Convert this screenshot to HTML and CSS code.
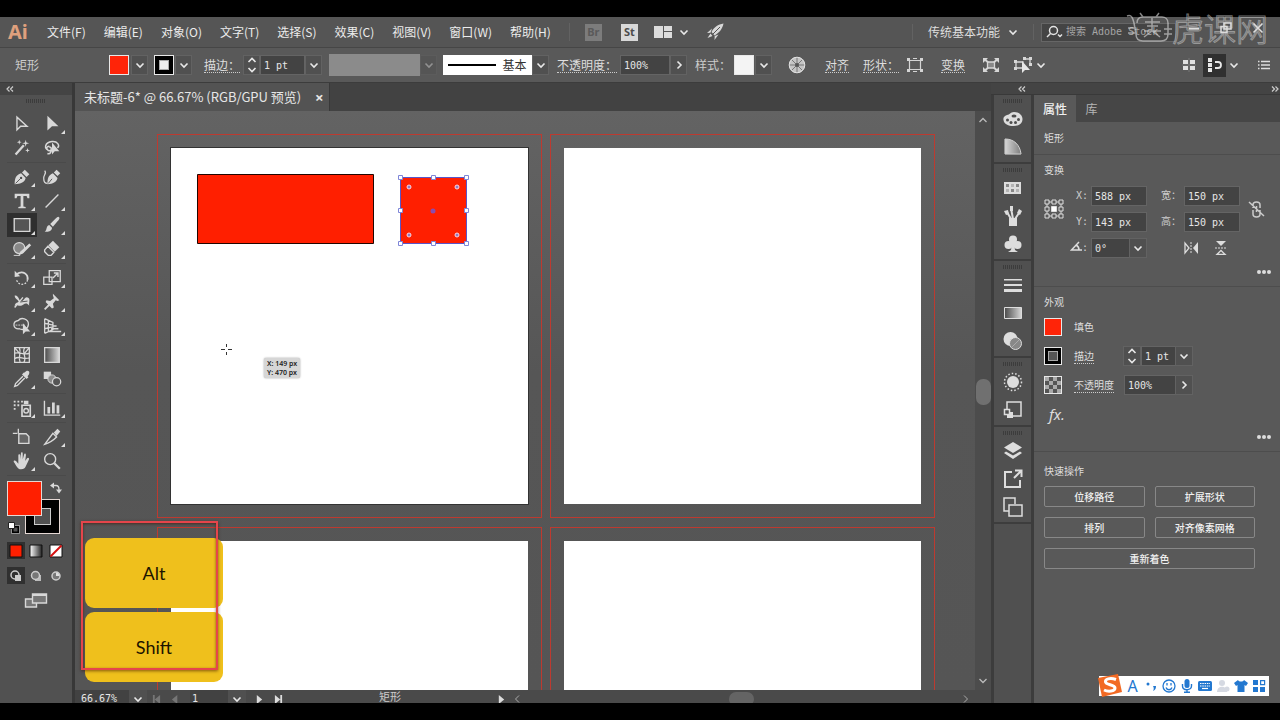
FILE: index.html
```html
<!DOCTYPE html>
<html lang="zh-CN">
<head>
<meta charset="utf-8">
<title>未标题-6</title>
<link rel="stylesheet" href="styles.css">
</head>
<body>
<svg class="defs" aria-hidden="true">
  <defs>
    <linearGradient id="fade" x1="0" x2="1"><stop offset="0" stop-color="#4a4a4a"/><stop offset="1" stop-color="#d8d8d8"/></linearGradient>
    <linearGradient id="fade-rev" x1="0" x2="1"><stop offset="0" stop-color="#ffffff"/><stop offset="1" stop-color="#222222"/></linearGradient>
    <symbol id="down" viewBox="0 0 10 10"><path d="M1.5 3.5 5 7l3.5-3.5" fill="none" stroke="currentColor" stroke-width="1.6"/></symbol>
    <symbol id="right" viewBox="0 0 10 10"><path d="M3.5 1.5 7 5 3.5 8.500" fill="none" stroke="currentColor" stroke-width="1.6"/></symbol>
    <symbol id="steps" viewBox="0 0 10 18"><path d="M1.500 6 5 2.500 8.500 6M1.500 12 5 15.500 8.500 12" fill="none" stroke="currentColor" stroke-width="1.600"/></symbol>
    <symbol id="collapse" viewBox="0 0 8 6"><path d="M3.500.5 1 3l2.500 2.500M7 .5 4.500 3 7 5.500" fill="none" stroke="currentColor" stroke-width="1.200"/></symbol>
    <symbol id="dots" viewBox="0 0 16 6"><circle cx="3" cy="3" r="2"/><circle cx="8" cy="3" r="2"/><circle cx="13" cy="3" r="2"/></symbol>
  </defs>
</svg>

<div class="app">
  <header class="menubar">
    <span class="logo">Ai</span>
    <nav class="menus">
      <button>文件(F)</button><button>编辑(E)</button><button>对象(O)</button><button>文字(T)</button><button>选择(S)</button><button>效果(C)</button><button>视图(V)</button><button>窗口(W)</button><button>帮助(H)</button>
    </nav>
    <div class="launchers">
      <button class="badge dim">Br</button>
      <button class="badge">St</button>
      <button class="arrange" aria-label="排列文档"><svg width="18" height="12" viewBox="0 0 18 12"><path d="M0 0h9v12H0zM10 0h8v5h-8zM10 6h8v6h-8z" fill="#dcdcdc"/></svg><svg class="chev"><use href="#down"/></svg></button>
      <button aria-label="GPU"><svg width="18" height="18" viewBox="0 0 18 18"><path d="M17.500.5C12 1.500 8 4 5.500 9l3 3.500C13 10 16.500 6 17.500.5zM6 5.500 1 10l3.500-.3zM12.500 11.500 8.500 17l.2-4zM4.500 10.500 1.500 15l5-2z" fill="#d8d8d8"/><path d="m7 11 7-7" stroke="#535353"/></svg></button>
    </div>
    <button class="workspace">传统基本功能 <svg class="chev"><use href="#down"/></svg></button>
    <label class="search"><svg width="18" height="14" viewBox="0 0 18 14" fill="none" stroke="#e4e4e4" stroke-width="1.500"><circle cx="7.500" cy="5.500" r="4"/><path d="M4.500 8.500 1 12"/><path d="m12 9.500 2 2 2-2"/></svg><input type="text" placeholder="搜索 Adobe Stock" aria-label="搜索 Adobe Stock"></label>
    <div class="window-buttons">
      <button aria-label="最小化"><svg width="12" height="12" viewBox="0 0 12 12"><path d="M1 6.500h10" stroke="#ddd" stroke-width="2"/></svg></button>
      <button aria-label="还原"><svg width="12" height="12" viewBox="0 0 12 12" fill="none" stroke="#ddd" stroke-width="1.500"><path d="M4 1h7v6H4zM1 4.500h6v6H1z"/></svg></button>
      <button aria-label="关闭"><svg width="12" height="12" viewBox="0 0 12 12"><path d="m1.500 1.500 9 9m0-9-9 9" stroke="#ddd" stroke-width="1.600"/></svg></button>
    </div>
    <div class="watermark">
      <svg width="46" height="32" viewBox="0 0 46 32" fill="none" stroke="currentColor" stroke-width="1.500"><path d="M1 5c5-2 6 3 7 7l2 11c0 5 3 7 7 7h18c5 0 7-3 7-7V12c0-4-3-6-6-6H17c-4 0-6 2-6 6M14 2l3 4M33 2l-3 4M19 11h15M21 15h11M18 20h17M26 7v13M26 20l-8 6M26 20l8 6M2 17h8M2 22h7M38 18h8M38 23h8"/></svg>
      <span>虎课网</span>
    </div>
  </header>

  <div class="controls">
    <span class="selection">矩形</span>
    <button class="swatch red" aria-label="填色"></button>
    <button class="drop" aria-label="填色选项"><svg class="chev"><use href="#down"/></svg></button>
    <button class="swatch stroke" aria-label="描边颜色"></button>
    <button class="drop" aria-label="描边选项"><svg class="chev"><use href="#down"/></svg></button>
    <label class="dotted" for="stroke-top">描边：</label>
    <button class="drop" aria-label="调整描边"><svg class="steps"><use href="#steps"/></svg></button>
    <input class="field" id="stroke-top" type="text" value="1 pt">
    <button class="drop" aria-label="描边粗细"><svg class="chev"><use href="#down"/></svg></button>
    <button class="profile" aria-label="宽度配置文件"></button>
    <button class="drop faint" aria-label="配置文件列表"><svg class="chev"><use href="#down"/></svg></button>
    <button class="brush"><i></i>基本</button>
    <button class="drop" aria-label="画笔列表"><svg class="chev"><use href="#down"/></svg></button>
    <label class="dotted" for="opacity-top">不透明度：</label>
    <input class="field" id="opacity-top" type="text" value="100%">
    <button class="drop" aria-label="不透明度选项"><svg class="chev"><use href="#right"/></svg></button>
    <span class="plain">样式：</span>
    <button class="swatch white" aria-label="样式"></button>
    <button class="drop" aria-label="样式列表"><svg class="chev"><use href="#down"/></svg></button>
    <button class="glyph" aria-label="重新着色图稿"><svg width="18" height="18" viewBox="0 0 18 18"><circle cx="9" cy="9" r="8" fill="#c4c4c4"/><path d="M9 1v16M1 9h16M3.500 3.500l11 11M14.500 3.500l-11 11" stroke="#777" /><circle cx="9" cy="9" r="2" fill="#555"/><circle cx="9" cy="9" r="7.800" fill="none" stroke="#e2e2e2"/></svg></button>
    <button class="dotted">对齐</button>
    <button class="dotted">形状：</button>
    <button class="glyph" aria-label="形状属性"><svg width="18" height="16" viewBox="0 0 18 16" fill="none" stroke="#d4d4d4" stroke-width="1.200"><path d="M3.500 3.500h11v9h-11z"/><path d="M1 1h3v3H1zM14 1h3v3h-3zM1 12h3v3H1zM14 12h3v3h-3z" fill="#d4d4d4" stroke="none"/><path d="M7 1.500h4M7 14.500h4"/></svg></button>
    <button class="dotted">变换</button>
    <button class="glyph" aria-label="隔离"><svg width="18" height="16" viewBox="0 0 18 16" fill="#d6d6d6"><path d="M5.500 5h7v6h-7z" fill="#888" stroke="#d6d6d6" stroke-width="1.300"/><path d="M1 1h5L4.500 2.500 7 5 5.500 6 3 4 1 6zM17 1v5l-2-2-2.500 2L11 5l2.500-2.500L12 1zM1 15v-5l2 2 2.500-2L7 11l-2.500 2.500L6 15zM17 15h-5l1.500-1.500L11 11l1.500-1 2.500 2 2-2z"/></svg></button>
    <button class="glyph pair" aria-label="选择类似对象"><svg width="18" height="18" viewBox="0 0 18 18"><path d="M2 6h7v6H2zM11 3h5v5" fill="none" stroke="#d8d8d8" stroke-width="1.300"/><path d="M0 4h3v3H0zM0 11h3v3H0zM9 1h3v3H9zM15 1h3v3h-3zM15 7h3v3h-3z" fill="#d8d8d8"/><path d="M8 5v12l3-3h5z" fill="#e6e6e6"/></svg><svg class="chev"><use href="#down"/></svg></button>
    <span></span>
    <button class="glyph" aria-label="对齐像素"><svg width="14" height="14" viewBox="0 0 14 14" fill="#e0e0e0"><path d="M1 2h5v4H1zM8 2h5v4H8zM1 8h5v4H1zM8 8h5v4H8z"/><path d="M7 0v14M0 7h14" stroke="#777"/></svg></button>
    <button class="glyph active" aria-label="贴紧"><svg width="16" height="16" viewBox="0 0 16 16" fill="#e8e8e8"><path d="M1 1h4v4H1zM1 6h4v4H1zM1 11h4v4H1z"/><path d="M8 5h3a3 3 0 0 1 0 6H8" fill="none" stroke="#e8e8e8" stroke-width="1.800"/></svg></button>
    <svg class="chev"><use href="#down"/></svg>
    <button class="glyph" aria-label="菜单"><svg width="14" height="12" viewBox="0 0 14 12" stroke="#ddd" stroke-width="1.500"><path d="M4 2.500h9M4 6h9M4 9.500h9M1 2.500h1.500M1 6h1.500M1 9.500h1.500"/></svg></button>
  </div>

  <main class="workarea">
    <aside class="toolbox">
      <div class="cap"><svg width="8" height="6"><use href="#collapse"/></svg></div>
      <div class="grip"></div>
      <div class="tools">
        <div class="group">
          <button aria-label="选择"><svg viewBox="0 0 24 24"><path d="M6.500 4.500v14l4-4h7z" fill="none" stroke="#d8d8d8" stroke-width="1.500"/></svg></button>
          <button class="more" aria-label="直接选择"><svg viewBox="0 0 24 24"><path d="M7 3v16l5-4.500h7z"/></svg></button>
          <button aria-label="魔棒"><svg viewBox="0 0 24 24"><path d="m5 19 9-10" stroke="#d8d8d8" stroke-width="2.500"/><path d="m16 3 .8 3 3 .8-3 .8-.8 3-.8-3-3-.8 3-.8zM9 3l.6 2 2 .6-2 .6L9 8.500l-.6-2.300-2-.6 2-.6zM18 12l.6 2 2 .6-2 .6-.6 2-.6-2-2-.6 2-.6z"/></svg></button>
          <button aria-label="套索"><svg viewBox="0 0 24 24"><path d="M8 14c-5-1-4-8 4-9 6-.5 9 4 6 7M9 10c-4 0-3 5 0 5 3 0 3-4 0-4M11 12c1 4-1 7-4 6" fill="none" stroke="#d8d8d8" stroke-width="1.600"/><path d="M12 6v13l3-3.500h5z"/></svg></button>
        </div>
        <div class="group">
          <button class="more" aria-label="钢笔"><svg viewBox="0 0 24 24"><path d="M4 20c0-6 1-10 7-12l5 5c-1 5-5 6-12 7zM12 7l3-3 5 5-3 3z"/><path d="m5 19 5-5" stroke="#4f4f4f"/><circle cx="11" cy="13" r="1.300" fill="#4f4f4f"/></svg></button>
          <button aria-label="曲率"><svg viewBox="0 0 24 24"><path d="M7 20c0-6 1-10 6-12l5 5c-1 5-5 6-11 7zM14 7l3-3 4 4-3 3z"/><path d="M4 5c3 3-2 5-1 9 0 3 1 5 4 5" fill="none" stroke="#d8d8d8" stroke-width="1.400"/><path d="m8 19 4-5" stroke="#4f4f4f"/></svg></button>
          <button class="more" aria-label="文字"><svg viewBox="0 0 24 24"><path d="M4 4h16v5h-2l-1-2.500h-3.500V18l2.500.5V20H8v-1.500l2.500-.5V6.500H7L6 9H4z"/></svg></button>
          <button class="more" aria-label="直线段"><svg viewBox="0 0 24 24"><path d="M5 19 19 5" stroke="#d8d8d8" stroke-width="1.500"/></svg></button>
          <button class="more on" aria-label="矩形"><svg viewBox="0 0 24 24"><path d="M3.500 5h17v14h-17z" fill="#555" stroke="#d8d8d8" stroke-width="1.500"/></svg></button>
          <button class="more" aria-label="画笔"><svg viewBox="0 0 24 24"><path d="M19 3c2 1 1 3-1 5l-5 6-3-3 6-6c1-1 2-2 3-2zM9 12l3 3c0 4-5 5-8 4 3-1 1-6 5-7z"/></svg></button>
          <button class="more" aria-label="Shaper"><svg viewBox="0 0 24 24"><circle cx="9" cy="11" r="6" fill="#888" stroke="#d8d8d8" stroke-width="1.300"/><path d="m20 6 2 2-9 9-5 2 2-4z"/><path d="M3 19h7" stroke="#d8d8d8"/></svg></button>
          <button class="more" aria-label="橡皮擦"><svg viewBox="0 0 24 24"><path d="m13 3 7 7-5 5-7-7z"/><path d="m7.500 9 6.500 6.500-3 3.500h-3l-4-4v-2z" fill="none" stroke="#d8d8d8" stroke-width="1.500"/></svg></button>
        </div>
        <div class="group">
          <button class="more" aria-label="旋转"><svg viewBox="0 0 24 24"><path d="M6 8c7-5 13 0 12 6" fill="none" stroke="#d8d8d8" stroke-width="2"/><path d="M18 14c-1 6-10 7-12 0" fill="none" stroke="#d8d8d8" stroke-width="1.300" stroke-dasharray="2 1.500"/><path d="M4 4v7l6-1z"/></svg></button>
          <button class="more" aria-label="比例缩放"><svg viewBox="0 0 24 24"><path d="M9 4h12v12H9zM3 11h9v8H3z" fill="none" stroke="#d8d8d8" stroke-width="1.400"/><path d="m13 12 5-5M14 6.500h4.500V11" fill="none" stroke="#d8d8d8" stroke-width="1.500"/></svg></button>
          <button class="more" aria-label="宽度"><svg viewBox="0 0 24 24"><path d="M4 5c5-1 4 7 8 6 3-1 3-5 6-4 4 1 1 6 2 9-4-5-6-1-9 0-4 1-4-3-7 1 0-4 3-5 5-4-1-4-5-4-5-8z"/><path d="M4 18 13 7" stroke="#d8d8d8" stroke-width="1.500"/><path d="m10 12 8-1" stroke="#4f4f4f"/></svg></button>
          <button class="more" aria-label="操控变形"><svg viewBox="0 0 24 24"><path d="m13 3 7 7-2 1-2-1-3 4 1 4-2 1-7-7 1-2 4 1 4-3-1-3z"/><path d="m4 20 5-5" stroke="#d8d8d8" stroke-width="2"/></svg></button>
          <button class="more" aria-label="形状生成器"><svg viewBox="0 0 24 24"><path d="M8 6c3-4 11-2 11 4 0 5-6 7-10 5-7 1-8-8-1-9z" fill="none" stroke="#d8d8d8" stroke-width="1.400"/><path d="M5 11h10" stroke="#d8d8d8" stroke-dasharray="2 1"/><path d="M13 9v12l3-3h5z"/></svg></button>
          <button class="more" aria-label="透视网格"><svg viewBox="0 0 24 24" fill="none" stroke="#d8d8d8" stroke-width="1.400"><path d="M4 4v16M4 4l9 4v8l-9 4M8 6v12M4 9l9 2M4 15l9-2M13 12h4M11 15h8M8 18h14"/></svg></button>
        </div>
        <div class="group">
          <button aria-label="网格"><svg viewBox="0 0 24 24" fill="none" stroke="#d8d8d8" stroke-width="1.400"><path d="M4 4h16v16H4zM4 10c6-2 10 3 16 0M4 16c5-4 10 2 16-1M9 4c3 5-2 10 1 16M15 4c-4 5 3 10-1 16M4 4l5 6M20 4l-5 6"/></svg></button>
          <button aria-label="渐变"><svg viewBox="0 0 24 24"><path d="M4 4h16v16H4z" fill="url(#fade)" stroke="#d8d8d8" stroke-width="1.400"/></svg></button>
          <button class="more" aria-label="吸管"><svg viewBox="0 0 24 24"><path d="M15 5c2-3 5-2 5 0s-1 3-2 4l1 1-2 2-5-5 2-2z"/><path d="m13 9-8 8-1 3 3-1 8-8" fill="none" stroke="#d8d8d8" stroke-width="1.500"/></svg></button>
          <button aria-label="混合"><svg viewBox="0 0 24 24"><path d="M3 4h8v8H3z"/><circle cx="12" cy="12" r="4.500" fill="#8b8b8b" stroke="#d8d8d8"/><circle cx="17" cy="15" r="4.500" fill="#555" stroke="#d8d8d8" stroke-width="1.400"/></svg></button>
        </div>
        <div class="group">
          <button class="more" aria-label="符号喷枪"><svg viewBox="0 0 24 24"><path d="M12 9h9v12h-9z" fill="none" stroke="#d8d8d8" stroke-width="1.800"/><path d="M14 4h5v4h-5zM3 4h2v2H3zM7 4h2v2H7zM11 4h2v2h-2zM3 8h2v2H3zM7 8h2v2H7zM3 12h2v2H3z"/><circle cx="16.500" cy="15" r="2.500" fill="none" stroke="#d8d8d8" stroke-width="1.500"/></svg></button>
          <button class="more" aria-label="柱形图"><svg viewBox="0 0 24 24"><path d="M3 4h1.500v15H21v1.500H3zM7 11h3v7H7zM12 6h3v12h-3zM17 9h3v9h-3z"/></svg></button>
        </div>
        <div class="group">
          <button aria-label="画板"><svg viewBox="0 0 24 24"><path d="M8 3v5M2 8h5" stroke="#d8d8d8" stroke-width="1.400"/><path d="M8.500 8.500h8l3 3V19h-11z" fill="#666" stroke="#d8d8d8" stroke-width="1.500"/></svg></button>
          <button class="more" aria-label="切片"><svg viewBox="0 0 24 24"><path d="m4 20 9-12 4 4c-3 3-6 6-13 8z" fill="none" stroke="#d8d8d8" stroke-width="1.500"/><path d="m14 7 4-4 3 3-4 5z"/></svg></button>
          <button class="more" aria-label="抓手"><svg viewBox="0 0 24 24"><path d="M8 15V6c0-2 2-2 2 0v4l.8-6c.2-2 2-2 2 0v6l1.500-5c.5-2 2-1 2 .5L15.500 12l2-3c1-1.500 3 0 2 1.500L16 18c-1 2-2 3-5 3-4 0-5-4-8-8-.5-2 1.500-2 2.500-1z"/></svg></button>
          <button aria-label="缩放"><svg viewBox="0 0 24 24" fill="none" stroke="#d8d8d8"><circle cx="10" cy="10" r="6" stroke-width="1.500"/><path d="m14.500 14.500 6 6" stroke-width="2.500"/></svg></button>
        </div>
      </div>
      <div class="paint">
        <span class="paint-stroke"></span><span class="paint-fill"></span>
        <svg class="swap" width="12" height="12" viewBox="0 0 12 12" fill="none" stroke="#d8d8d8" stroke-width="1.300"><path d="M3 3.500h3c2 0 3 1 3 4V9"/><path d="M4 .5v6l-4-3zM6 7.500h6L9 11.500z" fill="#d8d8d8" stroke="none"/></svg>
        <svg class="reset" width="12" height="12" viewBox="0 0 12 12"><path d="M4.500 4.500h6v6h-6z" fill="none" stroke="#000" stroke-width="2"/><path d="M3.500 3.500h8v8h-8z" fill="none" stroke="#ddd" stroke-width=".6"/><path d="M.5.5h6v6h-6z" fill="#fff" stroke="#222"/></svg>
      </div>
      <div class="modes">
        <button class="on" aria-label="颜色"><svg viewBox="0 0 14 14"><path d="M1 1h12v12H1z" fill="#ff1f00" stroke="#111"/></svg></button>
        <button aria-label="渐变色"><svg viewBox="0 0 14 14"><path d="M1 1h12v12H1z" fill="url(#fade-rev)" stroke="#111"/></svg></button>
        <button aria-label="无"><svg viewBox="0 0 14 14"><path d="M1 1h12v12H1z" fill="#fff" stroke="#111"/><path d="M1.500 12.500 12.500 1.500" stroke="#d51010" stroke-width="2"/></svg></button>
      </div>
      <div class="modes draw">
        <button class="on" aria-label="正常绘图"><svg viewBox="0 0 14 14"><circle cx="6" cy="6" r="4" fill="none" stroke="#ccc" stroke-width="1.500"/><path d="M6 6h6v6H6z" fill="#ccc"/></svg></button>
        <button aria-label="背面绘图"><svg viewBox="0 0 14 14"><path d="M6 6h6v6H6z" fill="#bbb"/><circle cx="6.500" cy="6.500" r="4" fill="#777" stroke="#ccc" stroke-width="1.500"/></svg></button>
        <button aria-label="内部绘图"><svg viewBox="0 0 14 14"><circle cx="7" cy="7" r="4" fill="#777" stroke="#ccc" stroke-width="1.500"/><path d="M7 7V3.500A3.500 3.500 0 0 1 10.500 7z" fill="#ddd"/></svg></button>
      </div>
      <button class="screen" aria-label="更改屏幕模式"><svg width="24" height="18" viewBox="0 0 24 18" fill="#777" stroke="#d8d8d8" stroke-width="1.400"><path d="M1.500 7h11v8h-11z"/><path d="M8.500 2h14v9h-14z"/><path d="M8 3h15" stroke-width="2"/></svg></button>
    </aside>

    <section class="document">
      <div class="tabs"><div class="tab"><span>未标题-6* @ 66.67% (RGB/GPU 预览)</span><button aria-label="关闭文档">×</button></div></div>
      <div class="view">
        <div class="canvas">
          <div class="bleed r1 c1"><div class="artboard current"></div></div>
          <div class="bleed r1 c2"><div class="artboard"></div></div>
          <div class="bleed r2 c1"><div class="artboard"></div></div>
          <div class="bleed r2 c2"><div class="artboard"></div></div>
          <svg class="drawing" width="460" height="400" viewBox="0 0 460 400">
            <path d="M122.500 63.500h176v69h-176z" fill="#ff1f00" stroke="#220500"/>
            <path d="M325.500 66.500h66v66h-66z" fill="#ff1f00" stroke="#5a55c8"/>
            <g fill="#fff" stroke="#7f86d8"><path d="M323.500 64.500h4v4h-4zM356.500 64.500h4v4h-4zM389.500 64.500h4v4h-4zM323.500 97.500h4v4h-4zM389.500 97.500h4v4h-4zM323.500 130.500h4v4h-4zM356.500 130.500h4v4h-4zM389.500 130.500h4v4h-4z"/></g>
            <g fill="#8b7bc8" stroke="#ffd5dc"><circle cx="334" cy="76" r="2"/><circle cx="382" cy="76" r="2"/><circle cx="334" cy="124" r="2"/><circle cx="382" cy="124" r="2"/></g>
            <circle cx="358" cy="100" r="2.500" fill="#8a4cb0"/>
            <path d="M146 238.500h4m3 0h4M151.500 233v3m0 5v3" stroke="#333"/>
          </svg>
          <div class="coords">X: 149 px<br>Y: 470 px</div>
          <div class="keys"><kbd>Alt</kbd><kbd>Shift</kbd><div class="frame"></div></div>
        </div>
        <div class="vscroll"><svg width="10" height="10" viewBox="0 0 10 10" fill="none" stroke="#bbb" stroke-width="1.300"><path d="M1.500 7 5 3.500 8.500 7"/></svg><i></i><svg width="10" height="10" viewBox="0 0 10 10" fill="none" stroke="#bbb" stroke-width="1.300"><path d="M1.500 3 5 6.500 8.500 3"/></svg></div>
      </div>
      <div class="status">
        <input type="text" value="66.67%" aria-label="缩放级别"><button class="sdrop" aria-label="缩放列表"><svg class="chev"><use href="#down"/></svg></button>
        <button class="off" aria-label="第一个"><svg viewBox="0 0 10 10"><path d="M1 0h2v10H1zM9 0v10L3 5z"/></svg></button>
        <button class="off" aria-label="上一个"><svg viewBox="0 0 10 10"><path d="M7 0v10L1 5z"/></svg></button>
        <input class="page" type="text" value="1" aria-label="画板"><button class="sdrop" aria-label="画板列表"><svg class="chev"><use href="#down"/></svg></button>
        <button aria-label="下一个"><svg viewBox="0 0 10 10"><path d="M2 0v10l6-5z"/></svg></button>
        <button aria-label="最后一个"><svg viewBox="0 0 10 10"><path d="M1 0v10l6-5zM7 0h2v10H7z"/></svg></button>
        <span class="tool-name">矩形</span>
        <button aria-label="状态选项"><svg viewBox="0 0 10 10"><path d="M2 0v10l6-5z"/></svg></button>
        <div class="hscroll"><svg width="10" height="10" viewBox="0 0 10 10" fill="none" stroke="#aaa"><path d="M7 1.500 3.500 5 7 8.500"/></svg><i></i><svg width="10" height="10" viewBox="0 0 10 10" fill="none" stroke="#aaa"><path d="M3 1.500 6.500 5 3 8.500"/></svg></div>
      </div>
    </section>

    <aside class="dock">
      <div class="cap"><svg width="8" height="6"><use href="#collapse"/></svg><svg class="flip" width="8" height="6"><use href="#collapse"/></svg></div>
      <div class="dock-body">
        <div class="strip">
          <div class="set"><div class="grip"></div>
            <button aria-label="颜色"><svg viewBox="0 0 20 20"><path d="M11 3C7 3 7 6 4 6 1 7 0 9 .5 11c.5 4 5 6 10 6 6 0 9-3 9-7S16 3 11 3z"/><g fill="#4d4d4d"><circle cx="4.500" cy="11" r="1.500"/><circle cx="8" cy="13.500" r="1.500"/><circle cx="12.500" cy="13.500" r="1.500"/><circle cx="15.500" cy="10.500" r="1.500"/><ellipse cx="11" cy="7" rx="2.500" ry="1.500"/></g></svg></button>
            <button aria-label="颜色参考"><svg viewBox="0 0 20 20"><path d="M2 2c9 0 15 6 16 15H2z" fill="url(#fade-rev)" stroke="#ddd"/><path d="M2 2c9 0 15 6 16 15H2z" fill="#bbb" opacity=".6"/></svg></button>
          </div>
          <div class="set"><div class="grip"></div>
            <button aria-label="色板"><svg viewBox="0 0 20 20"><path d="M1 4h17v12H1z"/><g fill="#888"><path d="M3 6h3v3H3zM13 6h3v3h-3zM8 11h3v3H8z"/></g><path d="M8 6h3v3H8zM3 11h3v3H3zM13 11h3v3h-3z" fill="#b4b4b4"/></svg></button>
            <button aria-label="画笔"><svg viewBox="0 0 20 20"><path d="M6 12h8v8H6z"/><path d="M8 13 4 6M10 13 8 2M12 13l4-6" stroke="#ddd" stroke-width="2"/><path d="M1 5l4-1 1 4-3 1zM7 0h3v5H7zM14 7l2-4 3 2-2 4z"/></svg></button>
            <button aria-label="符号"><svg viewBox="0 0 20 20"><circle cx="10" cy="5.500" r="4"/><circle cx="5.500" cy="11" r="4"/><circle cx="14.500" cy="11" r="4"/><path d="M9 9h2l1 7 3 2H5l3-2z"/></svg></button>
          </div>
          <div class="set"><div class="grip"></div>
            <button aria-label="描边"><svg viewBox="0 0 20 20"><path d="M1 4h18v1.500H1zM1 9h18v2H1zM1 14h18v3H1z"/></svg></button>
            <button aria-label="渐变面板"><svg viewBox="0 0 20 20"><path d="M1.500 4.500h17v11h-17z" fill="url(#fade)" stroke="#ddd"/></svg></button>
            <button aria-label="透明度"><svg viewBox="0 0 20 20"><circle cx="7.500" cy="8" r="7"/><circle cx="12.500" cy="12.500" r="6" fill="#888" stroke="#ddd"/><path d="m9 16 7-7" stroke="#aaa"/></svg></button>
          </div>
          <div class="set"><div class="grip"></div>
            <button aria-label="外观"><svg viewBox="0 0 20 20"><circle cx="10" cy="10" r="6"/><circle cx="10" cy="10" r="8.500" fill="none" stroke="#ddd" stroke-width="1.500" stroke-dasharray="1.500 2"/></svg></button>
            <button aria-label="图形样式"><svg viewBox="0 0 20 20"><path d="M4 9V2h14v14h-8" fill="none" stroke="#ddd" stroke-width="1.500"/><path d="M4 12h6v6H4z"/><path d="M1.500 9.500h5v5h-5z" fill="#505050" stroke="#ddd" stroke-width="1.500"/></svg></button>
          </div>
          <div class="set"><div class="grip"></div>
            <button aria-label="图层"><svg viewBox="0 0 20 20"><path d="m10 1 9 5.500-9 5.500-9-5.500z"/><path d="m1 12 2-1.500 7 4 7-4 2 1.500-9 6z"/></svg></button>
            <button aria-label="资源导出"><svg viewBox="0 0 20 20" fill="none" stroke="#ddd" stroke-width="2"><path d="M9 3H2v15h15v-7"/><path d="M12 1.500h6.500V8M18 2l-7 7"/></svg></button>
            <button aria-label="画板面板"><svg viewBox="0 0 20 20" fill="none" stroke="#ddd" stroke-width="1.500"><path d="M6 14H1V1h11v6"/><path d="M6 8h13v11H6z"/></svg></button>
          </div>
        </div>

        <div class="panel">
          <div class="panel-tabs"><button class="current">属性</button><button>库</button></div>
          <div class="section title">矩形</div>
          <div class="section">
            <h2>变换</h2>
            <div class="transform">
              <svg class="locator" width="20" height="20" viewBox="0 0 20 20" fill="none" stroke="#ddd"><path d="M1 1h4v4H1zM8 1h4v4H8zM15 1h4v4h-4zM1 8h4v4H1zM15 8h4v4h-4zM1 15h4v4H1zM8 15h4v4H8zM15 15h4v4h-4zM5 3h3M12 3h3M5 17h3M12 17h3M3 5v3M3 12v3M17 5v3M17 12v3"/><path d="M7.500 7.500h5v5h-5z" fill="#fff"/></svg>
              <label for="x">X:</label><input class="field" id="x" type="text" value="588 px">
              <label for="w">宽：</label><input class="field" id="w" type="text" value="150 px">
              <svg class="link" width="18" height="18" viewBox="0 0 18 18" fill="none" stroke="#ccc" stroke-width="1.500"><path d="M5 8V5c0-4 7-4 7 0v3M5 10v4c0 4 7 4 7 0v-4M8.500 6v6M1 2l15 14"/></svg>
              <label for="y">Y:</label><input class="field" id="y" type="text" value="143 px">
              <label for="h">高：</label><input class="field" id="h" type="text" value="150 px">
              <label class="angle" for="angle"><svg width="12" height="10" viewBox="0 0 12 10" fill="none" stroke="#ddd" stroke-width="1.500"><path d="M9 1 1.500 9H12M6 4c2 1 3 3 3 5"/></svg>:</label>
              <div class="combo"><input class="field" id="angle" type="text" value="0°"><button class="drop" aria-label="角度列表"><svg class="chev"><use href="#down"/></svg></button></div>
              <div class="flips">
                <button aria-label="水平翻转"><svg width="14" height="14" viewBox="0 0 14 14"><path d="M1 2v10l4-5z" fill="none" stroke="#ddd" stroke-width="1.300"/><path d="M14 1v12L9 7z" fill="#ddd"/><path d="M7 1v12" stroke="#ddd" stroke-dasharray="2 1"/></svg></button>
                <button aria-label="垂直翻转"><svg width="14" height="14" viewBox="0 0 14 14"><path d="M2 0h10L7 5z" fill="#ddd"/><path d="M3 13.300h8L7 9.500z" fill="none" stroke="#ddd" stroke-width="1.300"/><path d="M1 7h12" stroke="#ddd" stroke-dasharray="2 1"/></svg></button>
              </div>
            </div>
            <button class="dots" aria-label="更多选项"><svg width="16" height="6"><use href="#dots"/></svg></button>
          </div>
          <div class="section">
            <h2>外观</h2>
            <div class="looks">
              <button class="swatch red" aria-label="填色"></button><span>填色</span><span></span>
              <button class="swatch stroke" aria-label="描边"></button><label class="dotted" for="stroke-panel">描边</label>
              <div class="combo"><button class="drop" aria-label="调整"><svg class="steps"><use href="#steps"/></svg></button><input class="field" id="stroke-panel" type="text" value="1 pt"><button class="drop" aria-label="粗细列表"><svg class="chev"><use href="#down"/></svg></button></div>
              <span class="swatch checker"></span><label class="dotted" for="opacity-panel">不透明度</label>
              <div class="combo"><input class="field" id="opacity-panel" type="text" value="100%"><button class="drop" aria-label="滑块"><svg class="chev"><use href="#right"/></svg></button></div>
              <button class="fx">fx.</button>
            </div>
            <button class="dots" aria-label="更多外观选项"><svg width="16" height="6"><use href="#dots"/></svg></button>
          </div>
          <div class="section actions-section">
            <h2>快速操作</h2>
            <div class="actions"><button>位移路径</button><button>扩展形状</button><button>排列</button><button>对齐像素网格</button><button class="wide">重新着色</button></div>
          </div>
        </div>
      </div>
    </aside>
  </main>

  <div class="ime">
    <svg class="sogou" width="26" height="24" viewBox="0 0 26 24"><path d="m1 4 20-4 4 18-20 5z" fill="#f26a24"/><path d="M19 5.500C13 3.500 8 5 8.500 8c.5 3 9.500 2.500 9.500 6 0 3.500-7 4-11 2" fill="none" stroke="#fff" stroke-width="3"/></svg>
    <span>A</span>
    <svg width="14" height="14" viewBox="0 0 14 14" fill="#2378d0"><circle cx="4" cy="5" r="1.500"/><path d="M9 7h3c0 3-1 4-3 5 1-2 1-3 0-5z"/></svg>
    <svg width="14" height="14" viewBox="0 0 14 14" fill="none" stroke="#2378d0" stroke-width="1.300"><circle cx="7" cy="7" r="6"/><path d="M5 4v2.500M9 4v2.500M4 8.500c1 3 5 3 6 0"/></svg>
    <svg width="14" height="14" viewBox="0 0 14 14" fill="#2378d0"><rect x="4.500" y="0" width="5" height="9" rx="2.500"/><path d="M2.500 5v2c0 5 9 5 9 0V5M7 10v3M4 13.300h6" fill="none" stroke="#2378d0" stroke-width="1.400"/></svg>
    <svg width="14" height="14" viewBox="0 0 14 14"><rect x="0" y="2" width="14" height="10" rx="1.500" fill="#2378d0"/><path d="M2 4.500h10M2 7h10" stroke="#fff" stroke-width="1.200" stroke-dasharray="1.500 .8"/><path d="M4 9.500h6" stroke="#fff" stroke-width="1.200"/></svg>
    <svg width="14" height="14" viewBox="0 0 14 14" fill="#d5d9e2"><circle cx="6" cy="4" r="3"/><path d="M1 13c0-7 10-7 10 0z"/><circle cx="11" cy="10" r="2.500"/></svg>
    <svg width="14" height="14" viewBox="0 0 14 14" fill="#2378d0"><path d="M4 1c1 2 5 2 6 0l4 3-2 3-1.500-1v7h-7V6L2 7 0 4z"/></svg>
    <svg width="14" height="14" viewBox="0 0 14 14" fill="#2378d0"><path d="M1 1h5v5H1zM1 8h5v5H1zM8 8h5v5H8z"/><path d="M8.600 1.600h4v4h-4z" fill="none" stroke="#2378d0" stroke-width="1.200"/></svg>
  </div>
</div>
</body>
</html>
```

FILE: styles.css
```css
* { box-sizing: border-box; }
body {
  margin: 0;
  background: #000;
  color: #dedede;
  font: 12px/16px "Noto Sans CJK SC", sans-serif;
}
button, input {
  margin: 0;
  padding: 0;
  border: 0;
  background: none;
  color: inherit;
  font: inherit;
}
button { display: flex; align-items: center; justify-content: center; white-space: nowrap; }
input { min-width: 0; }
h2 { margin: 0; font-size: 10px; font-weight: 400; line-height: 16px; }
.defs { position: absolute; width: 0; height: 0; }
.chev { width: 10px; height: 10px; color: #e8e8e8; flex: none; }
.steps { width: 10px; height: 18px; color: #e8e8e8; }

.app {
  display: flex;
  flex-direction: column;
  height: 100vh;
  padding: 17px 0;
  overflow: hidden;
  position: relative;
}

/* Menu bar */
.menubar {
  display: flex;
  align-items: center;
  flex: none;
  height: 31px;
  padding-left: 8px;
  background: #555;
  border-bottom: 1px solid #464646;
  position: relative;
}
.logo { width: 39px; color: #dfa07d; font: 700 20px/28px "Noto Sans", sans-serif; }
.menus { display: flex; gap: 18px; color: #ececec; }
.launchers { display: flex; align-items: center; gap: 17px; margin-left: 18px; padding-left: 15px; border-left: 1px solid #626262; }
.badge { width: 17px; height: 17px; margin-right: 2px; background: #d8d8d8; color: #4b4b4b; font: 700 11px/16px "Noto Sans", sans-serif; }
.badge.dim { background: #7c7c7c; color: #5a5a5a; }
.arrange { gap: 7px; margin-left: -3px; }
.workspace { gap: 8px; margin-left: auto; padding: 0 15px; border-left: 1px solid #626262; border-right: 1px solid #626262; }
.search { display: flex; align-items: center; gap: 2px; width: 135px; height: 19px; margin-left: 7px; padding-left: 4px; background: #444; border: 1px solid #666; }
.search input { width: 108px; color: #ddd; font: 10px/16px "DejaVu Sans Mono", "Noto Sans CJK SC", monospace; }
.search input::placeholder { color: #a5a5a5; opacity: 1; }
.window-buttons { display: flex; gap: 20px; padding: 0 16px 8px 12px; }
.watermark {
  position: absolute;
  right: 12px;
  top: -7px;
  display: flex;
  align-items: center;
  color: rgba(220, 220, 220, .6);
  pointer-events: none;
}
.watermark span { font: 300 32px/34px "Noto Sans CJK SC", sans-serif; color: transparent; -webkit-text-stroke: 1px rgba(220, 220, 220, .5); }

/* Control bar */
.controls {
  display: grid;
  grid-template-columns: 94px 22px 23px 21px 29px 39px 17px 45px 24px 91px 23px 89px 25px 63px 50px 25px 39px 21px 33px 37px 38px 43px 35px 41px 32px minmax(32px, auto) 1fr 21px 26px 28px 23px;
  align-items: center;
  flex: none;
  height: 35px;
  padding-left: 15px;
  background: #595959;
  border-bottom: 1px solid #3c3c3c;
}
.controls button { justify-self: start; }
.selection { color: #ccc; }
.swatch { width: 20px; height: 20px; border: 1px solid #e8e8e8; }
.red { background: #ff2408; }
.stroke { background: #000; position: relative; }
.stroke::after { content: ""; width: 8px; height: 8px; background: #eee; border: 1px solid #aaa; }
.white { background: #f4f4f4; }
.drop { width: 17px; height: 20px; background: #505050; border: 1px solid #626262; }
.faint { opacity: .4; }
.field { width: 100%; height: 20px; padding-left: 3px; background: #434343; border: 1px solid #646464; color: #e6e6e6; font: 10px/16px "DejaVu Sans Mono", "Noto Sans CJK SC", monospace; }
.dotted { justify-self: start; border-bottom: 1px dotted #ccc; line-height: 15px; white-space: nowrap; }
.plain { color: #ccc; white-space: nowrap; }
.profile { width: 91px; height: 22px; background: #8b8b8b; }
.brush { width: 89px; height: 20px; gap: 6px; background: #fff; color: #333; }
.brush i { width: 48px; height: 2px; background: #000; }
.glyph.pair { gap: 4px; }
.glyph.active { width: 23px; height: 23px; background: #303030; }

/* Work area */
.workarea { display: grid; grid-template-columns: 75px minmax(0, 1fr) 289px; flex: 1; min-height: 0; }
.cap { display: flex; align-items: center; height: 12px; background: #444; color: #ccc; }
.grip { width: 20px; height: 4px; background: repeating-linear-gradient(90deg, #3c3c3c 0 1px, transparent 1px 2px); }

.toolbox { background: #515151; border-right: 3px solid #383838; overflow: hidden; }
.toolbox .cap { padding-left: 6px; }
.toolbox > .grip { margin: 4px 0 9px 26px; }
.tools { padding: 0 6px 0 7px; }
.group { display: grid; grid-template-columns: 30px 30px; grid-auto-rows: 24px; padding-bottom: 2px; margin-bottom: 2px; border-bottom: 1px solid #4a4a4a; }
.group button { position: relative; }
.group svg { width: 22px; height: 22px; }
.group svg:not([fill]) { fill: #d8d8d8; }
.group .on { background: #2f2f2f; }
.more::after { content: ""; position: absolute; right: 2px; bottom: 2px; border: 2px solid transparent; border-right-color: #ddd; border-bottom-color: #ddd; }
.paint { position: relative; height: 54px; margin: 5px 8px 7px 7px; }
.paint-fill, .paint-stroke { position: absolute; width: 35px; height: 35px; border: 1px solid #e5d8d4; }
.paint-fill { left: 0; top: 0; background: #ff1f00; }
.paint-stroke { left: 18px; top: 18px; background: #000; }
.paint-stroke::after { content: ""; position: absolute; inset: 8px; background: #515151; border: 1px solid #ccc; }
.swap { position: absolute; left: 43px; top: 1px; }
.reset { position: absolute; left: 1px; top: 41px; }
.modes { display: flex; gap: 2px; padding-left: 7px; margin-bottom: 6px; }
.modes button { width: 18px; height: 17px; }
.modes .on { background: #303030; }
.modes svg { width: 14px; height: 14px; }
.draw { margin: 8px 0; }
.screen { margin-left: 24px; }

.document { display: flex; flex-direction: column; min-width: 0; min-height: 0; }
.tabs { display: flex; height: 28px; background: #424242; }
.tab { display: flex; align-items: center; gap: 13px; padding: 0 5px 0 9px; background: #535353; border-right: 1px solid #393939; color: #e6e6e6; font-size: 13px; }
.tab button { width: 10px; font: 700 15px/16px "Noto Sans", sans-serif; }
.view { display: flex; flex: 1; min-height: 0; }
.canvas { position: relative; flex: 1; overflow: hidden; background: linear-gradient(#636363, #565656 45%, #555); }
.bleed { position: absolute; width: 385px; height: 384px; padding: 13px; border: 1px solid #bd3a30; }
.c1 { left: 82px; }
.c2 { left: 475px; }
.r1 { top: 23px; }
.r2 { top: 416px; }
.artboard { height: 356px; background: #fff; }
.artboard.current { outline: 1px solid #333; }
.drawing { position: absolute; left: 0; top: 0; }
.coords { position: absolute; left: 189px; top: 247px; padding: 1px 3px; background: #d6d6d6; border-radius: 2px; box-shadow: 0 0 2px #999; color: #222; font: 600 7px/9px "Noto Sans", sans-serif; }
.keys { position: absolute; left: 10px; bottom: 8px; display: grid; gap: 4px; width: 138px; }
.keys kbd { display: flex; align-items: center; justify-content: center; height: 70px; border-radius: 9px; background: #efc01c; color: #1c1400; font: 18px/24px "Liberation Sans Narrow", Lato, sans-serif; }
.frame { position: absolute; left: -4px; top: -17px; width: 137px; height: 149px; border: 2px solid #e5454b; box-shadow: 0 1px 3px rgba(60, 20, 0, .6), inset 0 1px 3px rgba(60, 20, 0, .6); }
.vscroll { display: flex; flex-direction: column; align-items: center; width: 16px; padding: 4px 0; background: #4c4c4c; }
.vscroll i { width: 15px; height: 26px; margin-top: 254px; margin-bottom: auto; border-radius: 7px; background: #707070; }
.status { display: flex; align-items: flex-start; flex: none; height: 13px; overflow: hidden; background: #4a4a4a; color: #ccc; }
.status > * { flex: none; height: 18px; }
.status input { width: 54px; padding-left: 6px; background: #424242; color: #e6e6e6; font: 10px/18px "DejaVu Sans Mono", monospace; }
.status button { width: 19px; }
.status button svg:not(.chev) { width: 9px; height: 9px; fill: #ddd; }
.status .sdrop { width: 18px; background: #505050; }
.status .off { opacity: .3; }
.status .page { width: 38px; padding-left: 2px; margin-left: 5px; }
.status .sdrop + button:not(.off) { margin-left: 4px; }
.status .tool-name { flex: 1; height: 13px; font-size: 11px; line-height: 13px; text-align: center; }
.status .hscroll { display: flex; flex: 0 1 480px; align-items: center; justify-content: space-between; padding: 0 20px 0 1px; }
.hscroll i { width: 25px; height: 14px; border-radius: 7px; background: #646464; }

/* Right dock */
.dock { display: flex; flex-direction: column; background: #3c3c3c; min-height: 0; }
.dock .cap { justify-content: space-between; padding: 0 1px 0 27px; flex: none; border-bottom: 1px solid #393939; }
.flip { transform: rotate(180deg); }
.dock-body { display: grid; grid-template-columns: 37px 1fr; gap: 3px; flex: 1; min-height: 0; padding-left: 3px; }
.strip { background: #505050; }
.set { display: flex; flex-direction: column; align-items: center; padding: 4px 0 1px; border-bottom: 2px solid #3d3d3d; }
.set .grip { margin-bottom: 2px; }
.set button { width: 37px; height: 28px; }
.set svg { width: 20px; height: 20px; }
.set svg:not([fill]) { fill: #ddd; }
.panel { background: #595959; overflow: hidden; }
.panel-tabs { display: flex; height: 27px; background: #464646; }
.panel-tabs button { width: 31px; color: #b5b5b5; }
.panel-tabs .current { width: 42px; background: #595959; color: #f0f0f0; font-weight: 500; }
.section { padding: 7px 14px 7px 10px; border-bottom: 1px solid #4d4d4d; font-size: 10px; }
.title { padding: 8px 10px; }
.transform { display: grid; grid-template-columns: 20px 21px 56px 31px 56px 1fr; grid-template-rows: repeat(3, 20px); row-gap: 6px; column-gap: 3px; margin-top: 8px; align-items: center; }
.transform label { color: #ccc; font: 10px/16px "DejaVu Sans Mono", "Noto Sans CJK SC", monospace; text-align: right; white-space: nowrap; }
.locator { grid-row: 1 / 3; }
.link { grid-row: 1 / 3; grid-column: 6; justify-self: end; }
.angle { grid-column: 2; }
.combo { display: flex; }
.combo .drop { flex: none; width: 18px; margin-left: -1px; }
.flips { grid-column: 4 / 6; display: flex; justify-content: center; gap: 16px; padding-left: 22px; }
.dots { margin: 7px -6px 0 auto; height: 14px; }
.dots svg { fill: #ddd; }
.looks { display: grid; grid-template-columns: 30px 50px 69px; grid-auto-rows: 20px; row-gap: 9px; align-items: center; margin-top: 7px; }
.looks .swatch { width: 18px; height: 18px; }
.looks .stroke::after { background: #555; }
.looks label { line-height: 14px; }
.checker { background: repeating-conic-gradient(#555 0 25%, #aaa 0 50%) 0 0 / 8px 8px; }
.fx { font: italic 15px/18px "Noto Sans", sans-serif; justify-self: start; padding-left: 5px; }
.looks + .dots { margin-top: 6px; }
.actions-section { border: 0; padding: 11px 25px 12px 10px; }
.actions { display: grid; grid-template-columns: 1fr 1fr; gap: 10px; margin-top: 7px; }
.actions button { height: 21px; border: 1px solid #888; border-radius: 2px; color: #f0f0f0; font-weight: 500; }
.actions .wide { grid-column: 1 / 3; }

/* Input method bar */
.ime { position: absolute; right: 11px; bottom: 24px; display: flex; align-items: center; gap: 4px; height: 20px; padding-right: 3px; background: #fff; }
.ime .sogou { margin: 0 -2px; }
.ime span { width: 15px; color: #2378d0; font: 16px/20px "Noto Sans", sans-serif; text-align: center; }
```
